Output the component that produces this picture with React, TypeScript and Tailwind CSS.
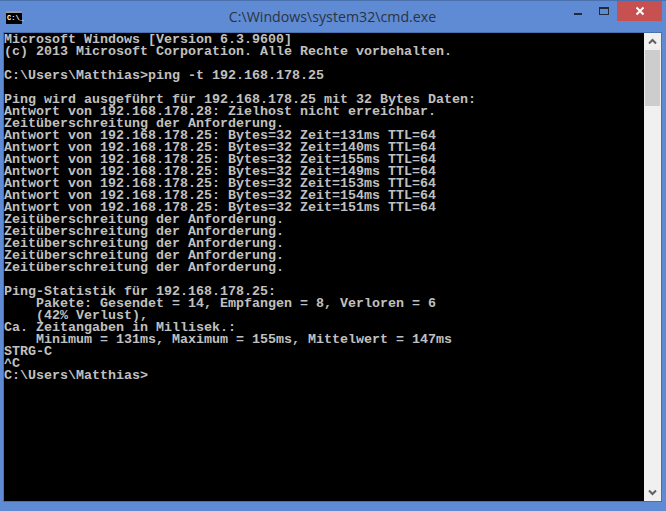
import React from 'react';

const lines = [
  "Microsoft Windows [Version 6.3.9600]",
  "(c) 2013 Microsoft Corporation. Alle Rechte vorbehalten.",
  "",
  "C:\\Users\\Matthias>ping -t 192.168.178.25",
  "",
  "Ping wird ausgeführt für 192.168.178.25 mit 32 Bytes Daten:",
  "Antwort von 192.168.178.28: Zielhost nicht erreichbar.",
  "Zeitüberschreitung der Anforderung.",
  "Antwort von 192.168.178.25: Bytes=32 Zeit=131ms TTL=64",
  "Antwort von 192.168.178.25: Bytes=32 Zeit=140ms TTL=64",
  "Antwort von 192.168.178.25: Bytes=32 Zeit=155ms TTL=64",
  "Antwort von 192.168.178.25: Bytes=32 Zeit=149ms TTL=64",
  "Antwort von 192.168.178.25: Bytes=32 Zeit=153ms TTL=64",
  "Antwort von 192.168.178.25: Bytes=32 Zeit=154ms TTL=64",
  "Antwort von 192.168.178.25: Bytes=32 Zeit=151ms TTL=64",
  "Zeitüberschreitung der Anforderung.",
  "Zeitüberschreitung der Anforderung.",
  "Zeitüberschreitung der Anforderung.",
  "Zeitüberschreitung der Anforderung.",
  "Zeitüberschreitung der Anforderung.",
  "",
  "Ping-Statistik für 192.168.178.25:",
  "    Pakete: Gesendet = 14, Empfangen = 8, Verloren = 6",
  "    (42% Verlust),",
  "Ca. Zeitangaben in Millisek.:",
  "    Minimum = 131ms, Maximum = 155ms, Mittelwert = 147ms",
  "STRG-C",
  "^C",
  "C:\\Users\\Matthias>",
];

function CmdIcon() {
  return (
    <div className="w-4 h-[13px] bg-black border-t-2 border-t-[#9a9a9a] flex items-start pl-px pt-[2px]">
      <span className="font-['Liberation_Mono',monospace] text-[7px] leading-[7px] font-bold text-white">C:\_</span>
    </div>
  );
}

export default function App() {
  return (
    <div className="w-[666px] h-[511px] bg-[#5f8ad4] border-t border-t-[#4a70ae] flex flex-col overflow-hidden">
      <div className="h-[31px] flex shrink-0 relative">
        <div className="pl-[6px] pt-[10px]">
          <CmdIcon />
        </div>
        <div className="flex-1 text-center pt-[6px] pr-[23px] font-['Open_Sans',sans-serif] text-[14.2px] leading-5 text-[#2b3440]">
          C:\Windows\system32\cmd.exe
        </div>
        {/* window buttons */}
        <div className="absolute right-[4px] top-0 h-5 flex">
          <div className="w-[26px] h-5 flex justify-center pt-[12px] pr-px">
            <div className="w-2 h-[2px] bg-[#1f2a3a]"></div>
          </div>
          <div className="w-[26px] h-5 flex justify-center pt-[6px]">
            <div className="w-[10px] h-2 border border-t-2 border-[#1f2a3a]"></div>
          </div>
          <div className="w-[45px] h-5 bg-[#c75050] flex items-center justify-center">
            <svg width="10" height="10" viewBox="0 0 10 10">
              <path d="M1.5 1.5 L8.5 8.5 M8.5 1.5 L1.5 8.5" stroke="#fff" strokeWidth="2" />
            </svg>
          </div>
        </div>
      </div>
      <div className="ml-[3px] mr-[4px] h-[470px] flex shrink-0 border border-[#4a70ae]">
        <pre className="flex-1 bg-black text-[#c0c0c0] font-['Liberation_Mono',monospace] font-bold text-[13.33px] leading-3 m-0 pt-px">
          {lines.map((l, i) => (
            <div key={i} className="h-3 whitespace-pre">{l}</div>
          ))}
        </pre>
        <div className="w-[17px] bg-[#f0f0f0] flex flex-col items-center">
          <div className="h-[17px] flex items-center justify-center">
            <svg width="9" height="7" viewBox="0 0 9 7">
              <path d="M1 5.5 L4.5 2 L8 5.5" fill="none" stroke="#606060" strokeWidth="2" />
            </svg>
          </div>
          <div className="w-[15px] h-[56px] bg-[#cdcdcd]"></div>
          <div className="flex-1"></div>
          <div className="h-[17px] flex items-center justify-center">
            <svg width="9" height="7" viewBox="0 0 9 7">
              <path d="M1 1.5 L4.5 5 L8 1.5" fill="none" stroke="#606060" strokeWidth="2" />
            </svg>
          </div>
        </div>
      </div>
    </div>
  );
}
